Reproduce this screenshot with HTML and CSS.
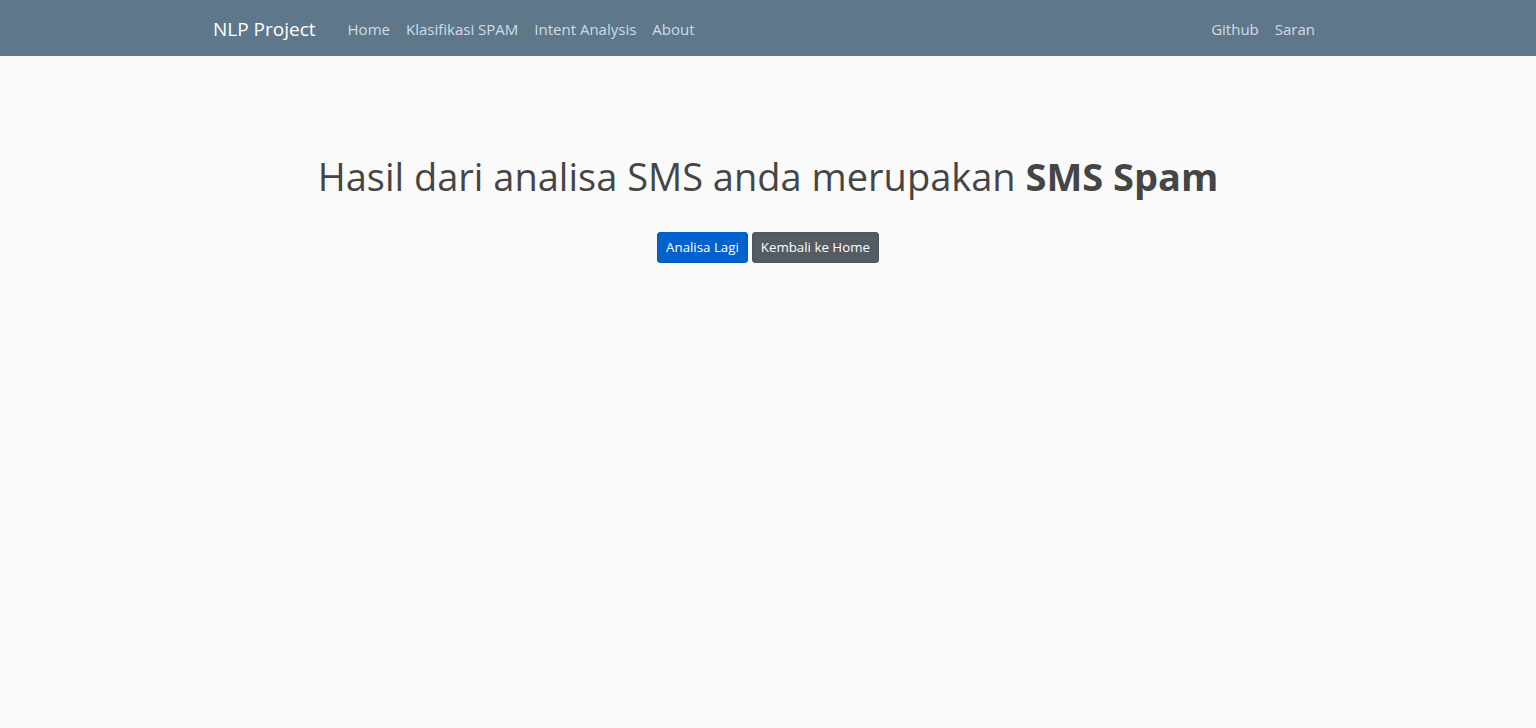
FILE: index.html
```html
<!DOCTYPE html>
<html lang="id">
<head>
<meta charset="utf-8">
<title>NLP Project</title>
<link rel="stylesheet" href="styles.css">
</head>
<body>
<nav class="navbar">
  <div class="container nav-inner">
    <a class="brand" href="#">NLP Project</a>
    <ul class="nav nav-left">
      <li><a href="#">Home</a></li>
      <li><a href="#">Klasifikasi SPAM</a></li>
      <li><a href="#">Intent Analysis</a></li>
      <li><a href="#">About</a></li>
    </ul>
    <ul class="nav nav-right">
      <li><a href="#">Github</a></li>
      <li><a href="#">Saran</a></li>
    </ul>
  </div>
</nav>
<main class="container main">
  <h1 class="result">Hasil dari analisa SMS anda merupakan <b>SMS Spam</b></h1>
  <div class="actions">
    <a class="btn btn-primary" href="#">Analisa Lagi</a>
    <a class="btn btn-secondary" href="#">Kembali ke Home</a>
  </div>
</main>
</body>
</html>
```
FILE: styles.css
```css
* { box-sizing: border-box; }
html, body { margin: 0; padding: 0; }
body {
  background: #fafafa;
  font-family: "Open Sans", "Noto Sans", sans-serif;
  color: #454545;
  font-size: 16px;
  line-height: 1.5;
}
a { text-decoration: none; }
.container {
  width: 1140px;
  margin: 0 auto;
  padding: 0 15px;
}
.navbar {
  background: #5f778a;
  height: 56px;
}
.nav-inner {
  display: flex;
  align-items: center;
  height: 56px;
  padding-top: 2px;
}
.brand {
  color: #ffffff;
  font-size: 19px;
  margin-right: 24px;
  white-space: nowrap;
}
.nav {
  list-style: none;
  margin: 0;
  padding: 0;
  display: flex;
}
.nav a {
  display: block;
  color: #d3dbe3;
  padding: 8px 8px;
  font-size: 15px;
}
.nav-left { margin-right: auto; }
.main {
  padding-top: 98px;
  text-align: center;
}
.result {
  font-size: 38px;
  font-weight: 400;
  line-height: 1.2;
  margin: 0 0 32px;
  color: #454545;
}
.result b { font-weight: 700; }
.actions {
  display: flex;
  justify-content: center;
  gap: 4px;
}
.btn {
  display: inline-block;
  font-size: 13.3px;
  line-height: 21px;
  padding: 4px 8px;
  border-radius: 3px;
  color: #fff;
  border: 1px solid transparent;
}
.btn-primary { background: #0062cc; border-color: #005cbf; }
.btn-secondary { background: #545b62; border-color: #4e555b; }
```
